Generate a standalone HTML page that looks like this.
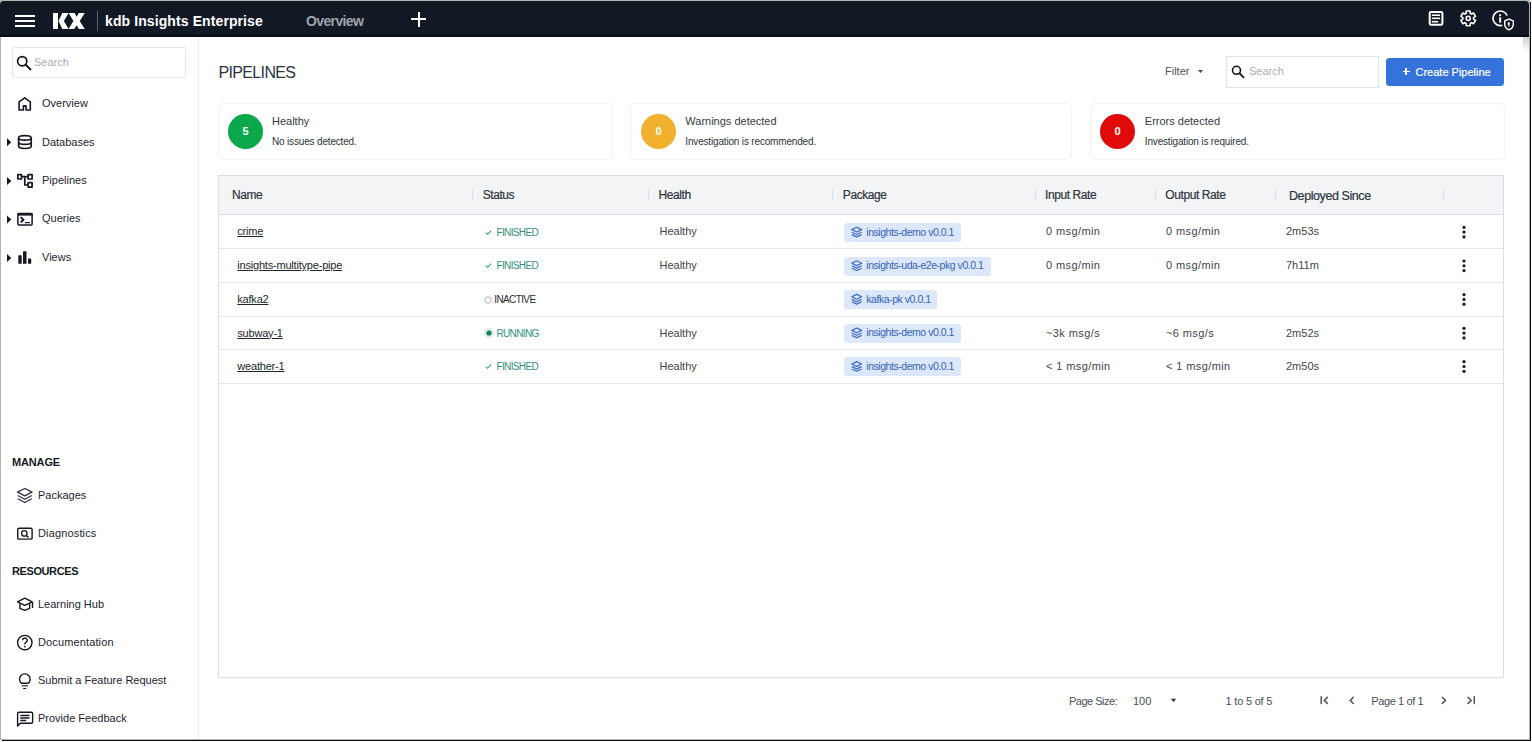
<!DOCTYPE html>
<html><head><meta charset="utf-8">
<style>
html,body{margin:0;padding:0;}
body{width:1532px;height:742px;position:relative;overflow:hidden;background:#fff;font-family:"Liberation Sans",sans-serif;}
.a{position:absolute;}
.t{position:absolute;white-space:nowrap;line-height:1;}
.fr{position:absolute;}
.sb{font-size:11px;color:#1e2430;}
.th{font-size:12px;letter-spacing:-0.42px;color:#2d3440;-webkit-text-stroke:0.2px #2d3440;}
.cell{font-size:11px;color:#3f444c;}
.st{font-size:10px;letter-spacing:-0.62px;color:#33907c;}
.bd{position:absolute;left:844px;height:19px;background:#dce7f9;border-radius:3px;}
.bdt{font-size:10.5px;letter-spacing:-0.46px;color:#3464b8;}
.lnk{font-size:11px;letter-spacing:-0.2px;color:#22272f;text-decoration:underline;text-underline-offset:0.8px;}
.sep{position:absolute;top:190px;width:1px;height:10px;background:#dde0e4;}
.rl{position:absolute;left:219px;width:1284px;height:1px;background:#e6e8eb;}
.keb{position:absolute;left:1462.5px;width:3px;}
.keb i{display:block;width:3px;height:3px;border-radius:50%;background:#1d222b;margin-bottom:1.8px;}
</style></head><body>
<!-- window frame -->
<div class="fr" style="left:0;top:0;width:1530px;height:740px;background:#b3b3b3;"></div>
<div class="fr" style="left:2px;top:740px;width:1529px;height:1px;background:#0a0a0a;"></div>
<div class="fr" style="left:1530px;top:2px;width:1px;height:739px;background:#0a0a0a;"></div>
<div class="fr" style="left:1px;top:30px;width:1528px;height:709px;background:#fff;"></div>

<!-- header -->
<div class="a" style="left:0;top:1px;width:1529px;height:36px;background:#131924;border-radius:4px 4px 0 0;box-shadow:inset 0 -2px 0 #080d17;"></div>
<div class="a" style="left:15px;top:15px;width:20px;height:2px;background:#fff;"></div>
<div class="a" style="left:15px;top:20px;width:20px;height:2px;background:#fff;"></div>
<div class="a" style="left:15px;top:25px;width:20px;height:2px;background:#fff;"></div>
<svg class="a" style="left:53px;top:13px" width="32" height="16" viewBox="0 0 32 16"><g fill="#fff"><rect x="0" y="0" width="5" height="16"/><polygon points="9.3,0 15.6,0 10.9,8 15.6,16 9.3,16 5.5,8"/><polygon points="15.6,0 21.7,0 23.6,3.7 25.9,0 31.8,0 26.7,8 31.8,16 25.9,16 23.6,12.2 21.3,16 15.6,16 20.4,8"/></g></svg>
<div class="a" style="left:97px;top:11px;width:1px;height:20px;background:#5c6370;"></div>
<div class="t" style="left:105px;top:14.1px;font-size:14px;font-weight:bold;color:#fff;letter-spacing:0.1px;">kdb Insights Enterprise</div>
<div class="t" style="left:306px;top:13.6px;font-size:14px;font-weight:bold;color:#9ea2a9;letter-spacing:-0.62px;">Overview</div>
<div class="a" style="left:411px;top:18px;width:15px;height:2px;background:#fff;"></div>
<div class="a" style="left:417.5px;top:11.5px;width:2px;height:15px;background:#fff;"></div>

<div class="a" style="left:1523px;top:37px;width:6px;height:15px;background:linear-gradient(#d2d2d2,#fff);"></div>
<!-- sidebar -->
<div class="a" style="left:198px;top:37px;width:1px;height:702px;background:#ececec;"></div>
<div class="a" style="left:12px;top:47px;width:172px;height:29px;border:1px solid #e6e6e6;border-radius:2px;"></div>
<svg class="a" style="left:15px;top:54px" width="18" height="18" viewBox="0 0 18 18"><circle cx="7.2" cy="7.2" r="4.6" fill="none" stroke="#111" stroke-width="1.7"/><line x1="10.5" y1="10.5" x2="16" y2="16" stroke="#111" stroke-width="1.8"/></svg>
<div class="t sb" style="left:34px;top:56.7px;color:#a9acb2;">Search</div>

<div class="t sb" style="left:42px;top:98.2px;">Overview</div>
<div class="t sb" style="left:42px;top:136.7px;">Databases</div>
<div class="t sb" style="left:42px;top:174.9px;">Pipelines</div>
<div class="t sb" style="left:42px;top:213.4px;">Queries</div>
<div class="t sb" style="left:42px;top:252.2px;">Views</div>

<div class="t" style="left:12px;top:457.2px;font-size:11px;font-weight:bold;color:#15191f;letter-spacing:-0.15px;">MANAGE</div>
<div class="t sb" style="left:38px;top:489.5px;">Packages</div>
<div class="t sb" style="left:38px;top:527.9px;letter-spacing:0.15px;">Diagnostics</div>
<div class="t" style="left:12px;top:565.8px;font-size:11px;font-weight:bold;color:#15191f;letter-spacing:-0.4px;">RESOURCES</div>
<div class="t sb" style="left:38px;top:598.6px;">Learning Hub</div>
<div class="t sb" style="left:38px;top:636.8px;letter-spacing:0.13px;">Documentation</div>
<div class="t sb" style="left:38px;top:674.9px;">Submit a Feature Request</div>
<div class="t sb" style="left:38px;top:713.2px;">Provide Feedback</div>

<!-- main title -->
<div class="t" style="left:218.5px;top:64.9px;font-size:16px;color:#2c333e;letter-spacing:-0.65px;">PIPELINES</div>
<div class="t" style="left:1165px;top:65.8px;font-size:11px;color:#4e535b;">Filter</div>
<svg class="a" style="left:1197px;top:69px" width="7" height="5" viewBox="0 0 7 5"><polygon points="0.8,1 6.2,1 3.5,4" fill="#4e535b"/></svg>
<div class="a" style="left:1226px;top:56px;width:151px;height:30px;border:1px solid #e3e3e3;"></div>
<svg class="a" style="left:1230px;top:64px" width="16" height="16" viewBox="0 0 16 16"><circle cx="6.5" cy="6.3" r="4" fill="none" stroke="#111" stroke-width="1.6"/><line x1="9.4" y1="9.2" x2="14" y2="13.8" stroke="#111" stroke-width="1.7"/></svg>
<div class="t" style="left:1249px;top:65.8px;font-size:11px;color:#a9acb2;">Search</div>
<div class="a" style="left:1386px;top:58px;width:118px;height:28px;background:#3572d9;border-radius:3.5px;"></div>
<div class="a" style="left:1402.5px;top:71px;width:7px;height:1.4px;background:#fff;"></div>
<div class="a" style="left:1405.3px;top:68.3px;width:1.4px;height:7px;background:#fff;"></div>
<div class="t" style="left:1415.5px;top:66.8px;font-size:11px;color:#fff;-webkit-text-stroke:0.2px #fff;">Create Pipeline</div>

<!-- cards -->
<div class="a" style="left:218px;top:103px;width:393px;height:55px;border:1px solid #f3f3f3;border-radius:4px;"></div>
<div class="a" style="left:630px;top:103px;width:440px;height:55px;border:1px solid #f3f3f3;border-radius:4px;"></div>
<div class="a" style="left:1090px;top:103px;width:413px;height:55px;border:1px solid #f3f3f3;border-radius:4px;"></div>
<div class="a" style="left:228px;top:113.5px;width:35px;height:35px;border-radius:50%;background:#0aa84a;"></div>
<div class="a" style="left:641px;top:113.5px;width:35px;height:35px;border-radius:50%;background:#f0b12f;"></div>
<div class="a" style="left:1100px;top:113.5px;width:35px;height:35px;border-radius:50%;background:#e00a0b;"></div>
<div class="t" style="left:228px;width:35px;text-align:center;top:125.6px;font-size:11px;font-weight:bold;color:#fff;">5</div>
<div class="t" style="left:641px;width:35px;text-align:center;top:125.6px;font-size:11px;font-weight:bold;color:#fff;">0</div>
<div class="t" style="left:1100px;width:35px;text-align:center;top:125.6px;font-size:11px;font-weight:bold;color:#fff;">0</div>
<div class="t" style="left:272px;top:115.8px;font-size:11px;color:#353a42;">Healthy</div>
<div class="t" style="left:272px;top:136.5px;font-size:10px;letter-spacing:-0.17px;color:#2e333a;">No issues detected.</div>
<div class="t" style="left:685.3px;top:115.8px;font-size:11px;color:#353a42;">Warnings detected</div>
<div class="t" style="left:685.3px;top:136.5px;font-size:10px;letter-spacing:-0.17px;color:#2e333a;">Investigation is recommended.</div>
<div class="t" style="left:1144.8px;top:115.8px;font-size:11px;color:#353a42;">Errors detected</div>
<div class="t" style="left:1144.8px;top:136.5px;font-size:10px;letter-spacing:-0.17px;color:#2e333a;">Investigation is required.</div>

<!-- table -->
<div class="a" style="left:218px;top:175px;width:1284px;height:501px;border:1px solid #d9dee4;"></div>
<div class="a" style="left:219px;top:176px;width:1284px;height:38px;background:#f3f4f6;"></div>
<div class="a" style="left:219px;top:214px;width:1284px;height:1px;background:#dde1e6;"></div>
<div class="sep" style="left:472px"></div>
<div class="sep" style="left:648px"></div>
<div class="sep" style="left:832px"></div>
<div class="sep" style="left:1035px"></div>
<div class="sep" style="left:1155px"></div>
<div class="sep" style="left:1275px"></div>
<div class="sep" style="left:1443px"></div>
<div class="t th" style="left:232px;top:188.7px;">Name</div>
<div class="t th" style="left:482.7px;top:188.7px;">Status</div>
<div class="t th" style="left:658.6px;top:188.7px;">Health</div>
<div class="t th" style="left:842.8px;top:188.7px;">Package</div>
<div class="t th" style="left:1045px;top:188.7px;">Input Rate</div>
<div class="t th" style="left:1165.3px;top:188.7px;">Output Rate</div>
<div class="t th" style="left:1289px;top:190.1px;font-size:12.5px;">Deployed Since</div>

<div class="rl" style="top:248px"></div>
<div class="rl" style="top:282px"></div>
<div class="rl" style="top:316px"></div>
<div class="rl" style="top:349px"></div>
<div class="rl" style="top:383px"></div>

<!-- rows -->
<div class="t lnk" style="left:237.3px;top:226.4px;">crime</div>
<div class="t lnk" style="left:237.3px;top:260.2px;">insights-multitype-pipe</div>
<div class="t lnk" style="left:237.3px;top:294.0px;">kafka2</div>
<div class="t lnk" style="left:237.3px;top:327.6px;">subway-1</div>
<div class="t lnk" style="left:237.3px;top:361.3px;">weather-1</div>

<svg class="a" style="left:485px;top:228.5px" width="7" height="7" viewBox="0 0 7 7"><polyline points="0.8,3.6 2.6,5.3 6.2,1.6" fill="none" stroke="#3b9a86" stroke-width="1.1"/></svg>
<div class="t st" style="left:496.4px;top:227.6px;">FINISHED</div>
<svg class="a" style="left:485px;top:262.3px" width="7" height="7" viewBox="0 0 7 7"><polyline points="0.8,3.6 2.6,5.3 6.2,1.6" fill="none" stroke="#3b9a86" stroke-width="1.1"/></svg>
<div class="t st" style="left:496.4px;top:261.4px;">FINISHED</div>
<svg class="a" style="left:483.5px;top:295.5px" width="8" height="8" viewBox="0 0 8 8"><circle cx="4" cy="4" r="3.2" fill="none" stroke="#aeb2bc" stroke-width="1"/></svg>
<div class="t st" style="left:494.3px;top:295.2px;color:#262a31;">INACTIVE</div>
<svg class="a" style="left:484px;top:328px" width="10" height="10" viewBox="0 0 10 10"><circle cx="5" cy="5" r="4.9" fill="#dcede6"/><circle cx="5" cy="5" r="2.6" fill="#17805f"/></svg>
<div class="t st" style="left:496.4px;top:328.8px;">RUNNING</div>
<svg class="a" style="left:485px;top:362.6px" width="7" height="7" viewBox="0 0 7 7"><polyline points="0.8,3.6 2.6,5.3 6.2,1.6" fill="none" stroke="#3b9a86" stroke-width="1.1"/></svg>
<div class="t st" style="left:496.4px;top:361.8px;">FINISHED</div>

<div class="t cell" style="left:659.5px;top:226.4px;">Healthy</div>
<div class="t cell" style="left:659.5px;top:260.2px;">Healthy</div>
<div class="t cell" style="left:659.5px;top:327.6px;">Healthy</div>
<div class="t cell" style="left:659.5px;top:361.3px;">Healthy</div>

<div class="bd" style="top:223px;width:117px;"></div>
<div class="bd" style="top:256.5px;width:147px;"></div>
<div class="bd" style="top:290px;width:93px;"></div>
<div class="bd" style="top:323.7px;width:117px;"></div>
<div class="bd" style="top:357.3px;width:117px;"></div>
<div class="t bdt" style="left:866.3px;top:226.6px;">insights-demo v0.0.1</div>
<div class="t bdt" style="left:866.3px;top:260.2px;">insights-uda-e2e-pkg v0.0.1</div>
<div class="t bdt" style="left:866.3px;top:293.8px;">kafka-pk v0.0.1</div>
<div class="t bdt" style="left:866.3px;top:327.4px;">insights-demo v0.0.1</div>
<div class="t bdt" style="left:866.3px;top:361.1px;">insights-demo v0.0.1</div>

<div class="t cell" style="left:1046px;top:226.4px;letter-spacing:0.4px;">0 msg/min</div>
<div class="t cell" style="left:1046px;top:260.2px;letter-spacing:0.4px;">0 msg/min</div>
<div class="t cell" style="left:1046px;top:327.6px;letter-spacing:0.4px;">~3k msg/s</div>
<div class="t cell" style="left:1046px;top:361.3px;letter-spacing:0.4px;">&lt; 1 msg/min</div>
<div class="t cell" style="left:1166px;top:226.4px;letter-spacing:0.4px;">0 msg/min</div>
<div class="t cell" style="left:1166px;top:260.2px;letter-spacing:0.4px;">0 msg/min</div>
<div class="t cell" style="left:1166px;top:327.6px;letter-spacing:0.4px;">~6 msg/s</div>
<div class="t cell" style="left:1166px;top:361.3px;letter-spacing:0.4px;">&lt; 1 msg/min</div>
<div class="t cell" style="left:1286px;top:226.4px;">2m53s</div>
<div class="t cell" style="left:1286px;top:260.2px;">7h11m</div>
<div class="t cell" style="left:1286px;top:327.6px;">2m52s</div>
<div class="t cell" style="left:1286px;top:361.3px;">2m50s</div>


<!-- pagination -->
<div class="t" style="left:1069px;top:695.9px;font-size:11px;color:#4b5059;letter-spacing:-0.5px;">Page Size:</div>
<div class="t" style="left:1133px;top:695.9px;font-size:11px;color:#4b5059;">100</div>
<svg class="a" style="left:1170px;top:697px" width="7" height="6" viewBox="0 0 7 6"><polygon points="0.8,1.8 6.2,1.8 3.5,5" fill="#2b3038"/></svg>
<div class="t" style="left:1225.5px;top:695.9px;font-size:11px;color:#4b5059;letter-spacing:-0.2px;">1 to 5 of 5</div>
<div class="t" style="left:1371.3px;top:695.9px;font-size:11px;color:#4b5059;letter-spacing:-0.4px;">Page 1 of 1</div>
<!-- icons overlay -->
<svg class="a" style="left:0;top:0" width="1532" height="742" viewBox="0 0 1532 742">
<g fill="none" stroke="#fff">
<rect x="1429.7" y="12" width="12.7" height="12.7" rx="1.3" stroke-width="2"/>
<g stroke-width="1.6"><line x1="1431.9" y1="15.2" x2="1440" y2="15.2"/><line x1="1431.9" y1="18.3" x2="1440" y2="18.3"/><line x1="1431.9" y1="21.7" x2="1438.1" y2="21.7"/></g>
<path stroke-width="1.6" stroke-linejoin="round" d="M1466.09 13.38 L1466.23 11.01 L1470.17 11.01 L1470.31 13.38 L1471.45 14.04 L1473.57 12.98 L1475.54 16.38 L1473.56 17.69 L1473.56 19.01 L1475.54 20.32 L1473.57 23.72 L1471.45 22.66 L1470.31 23.32 L1470.17 25.69 L1466.23 25.69 L1466.09 23.32 L1464.95 22.66 L1462.83 23.72 L1460.86 20.32 L1462.84 19.01 L1462.84 17.69 L1460.86 16.38 L1462.83 12.98 L1464.95 14.04 Z"/>
<circle cx="1468.2" cy="18.35" r="2.1" stroke-width="1.5"/>
<path stroke-width="1.6" d="M1507.1 15.6 A7.3 7.3 0 1 0 1502.3 25.3"/>
<path stroke-width="1.4" stroke-linejoin="round" d="M1509 19.2 L1513.3 20.9 V24.3 C1513.3 27 1511.6 28.9 1509 29.8 C1506.4 28.9 1504.7 27 1504.7 24.3 V20.9 Z"/>
</g>
<g fill="#fff">
<rect x="1499.2" y="17.3" width="1.9" height="5.3"/><rect x="1499.2" y="14.3" width="1.9" height="1.9"/>
<circle cx="1508.8" cy="23.4" r="1.1"/><rect x="1508.2" y="23.4" width="1.2" height="3"/>
</g>
<!-- sidebar icons -->
<g fill="none" stroke="#15191f" stroke-width="1.6" stroke-linejoin="round">
<path d="M19.1 110 V101.8 L24.7 97.9 L30.3 101.8 V110 H26 V105.9 H23.4 V110 Z"/>
<ellipse cx="24.9" cy="137.9" rx="6.3" ry="2.2" stroke-width="1.7"/>
<path stroke-width="1.7" d="M18.6 137.9 V146.3 A6.3 2.2 0 0 0 31.2 146.3 V137.9 M18.6 142.2 A6.3 2.2 0 0 0 31.2 142.2"/>
<g stroke-width="1.7"><rect x="17.8" y="174.6" width="3.7" height="4.4"/><rect x="28.1" y="174.6" width="4" height="4.4"/><rect x="28.1" y="182.7" width="4" height="4.4"/>
<path d="M21.5 176.7 H28 M24.8 176.7 V185 H28"/></g>
<rect x="17.9" y="213.6" width="14.2" height="11.3" rx="1" stroke-width="1.5"/><rect x="17.5" y="213" width="15" height="2.6" fill="#15191f" stroke="none"/>
<path d="M20.6 217.2 L23.6 219.8 L20.6 222.4" stroke-width="1.8"/>
<g stroke-width="1.3" stroke="#2d3440"><path d="M17.5 492.2 L24.8 488.5 L32 492.2 L24.8 495.8 Z"/><path d="M17.8 495.5 L24.8 499.2 L31.8 495.5 M17.8 498.8 L24.8 502.5 L31.8 498.8"/></g>
<rect x="17.7" y="528.2" width="14.4" height="10.9" rx="1.2" stroke-width="1.4"/>
<circle cx="24.3" cy="533.4" r="2.7" stroke-width="1.3"/><path d="M26.3 535.4 L28.6 537.6" stroke-width="1.4"/>
<path d="M17.5 601.8 L24.8 598.2 L32.2 601.8 L24.8 605.3 Z" stroke-width="1.4"/>
<path d="M19.9 603.3 V608.3 L24.8 610.3 L29.6 608.3 V603.3 M32.5 602 V608" stroke-width="1.4"/>
<circle cx="24.8" cy="642.6" r="7.2" stroke-width="1.4"/>
<path d="M22.6 640.3 A2.3 2.3 0 1 1 26.2 642.2 C25.2 642.9 24.8 643.5 24.8 644.6" stroke-width="1.4" stroke-linejoin="miter"/>
<path d="M21.4 683.2 A5.3 5.3 0 1 1 28.3 683.2 Z" stroke-width="1.4"/>
<path d="M17.6 726 V713.5 A1.2 1.2 0 0 1 18.8 712.3 H31.4 A1.2 1.2 0 0 1 32.6 713.5 V722 A1.2 1.2 0 0 1 31.4 723.2 H20.3 Z" stroke-width="1.4"/>
<g stroke-width="1.5"><path d="M20.3 715.4 H29.5 M20.3 717.9 H29.5 M20.3 720.4 H26.2"/></g>
</g>
<g fill="#15191f">
<polygon points="7,138.3 11.3,142.3 7,146.3"/>
<polygon points="7,177 11.3,181 7,185"/>
<polygon points="7,215.5 11.3,219.5 7,223.5"/>
<polygon points="7,254 11.3,258 7,262"/>
<rect x="25" y="222" width="4.9" height="1.2"/>
<rect x="18.3" y="255.2" width="3.4" height="8.6" rx="0.5"/><rect x="23" y="251.2" width="3.5" height="12.6" rx="0.5"/><rect x="28" y="258.5" width="3.2" height="5.3" rx="0.5"/>
<rect x="21.7" y="685" width="6.3" height="1.5" fill="#555"/><rect x="23" y="687.9" width="3.4" height="1.2" rx="0.6"/>
<circle cx="24.8" cy="646.6" r="0.9"/>
</g>
<!-- badge icons -->
<g fill="none" stroke="#3a6cc0" stroke-width="1.2" stroke-linejoin="round">
<path id="bic" d="M851.8 229.6 L856.7 227.2 L861.6 229.6 L856.7 232 Z M851.8 232.2 L856.7 234.5 L861.6 232.2 M851.8 234.6 L856.7 236.9 L861.6 234.6"/>
<use href="#bic" y="33.6"/><use href="#bic" y="67.2"/><use href="#bic" y="100.8"/><use href="#bic" y="134.4"/>
</g>
<g fill="#161b24"><circle cx="1464" cy="227.3" r="1.6"/><circle cx="1464" cy="232.1" r="1.6"/><circle cx="1464" cy="236.9" r="1.6"/><circle cx="1464" cy="261.0" r="1.6"/><circle cx="1464" cy="265.8" r="1.6"/><circle cx="1464" cy="270.6" r="1.6"/><circle cx="1464" cy="294.6" r="1.6"/><circle cx="1464" cy="299.4" r="1.6"/><circle cx="1464" cy="304.2" r="1.6"/><circle cx="1464" cy="328.3" r="1.6"/><circle cx="1464" cy="333.1" r="1.6"/><circle cx="1464" cy="337.9" r="1.6"/><circle cx="1464" cy="361.7" r="1.6"/><circle cx="1464" cy="366.5" r="1.6"/><circle cx="1464" cy="371.3" r="1.6"/></g>
<!-- pagination icons -->
<g fill="none" stroke="#4a5263" stroke-width="1.5" stroke-linecap="round">
<path d="M1321.2 696.8 V703.6 M1327.4 697.3 L1324.3 700.4 L1327.4 703.5"/>
<path d="M1353.3 697.3 L1350.2 700.4 L1353.3 703.5"/>
<path d="M1442.3 697.3 L1445.4 700.4 L1442.3 703.5"/>
<path d="M1468 697.3 L1471.1 700.4 L1468 703.5 M1474.3 696.8 V703.6"/>
</g>
</svg>
</body></html>
